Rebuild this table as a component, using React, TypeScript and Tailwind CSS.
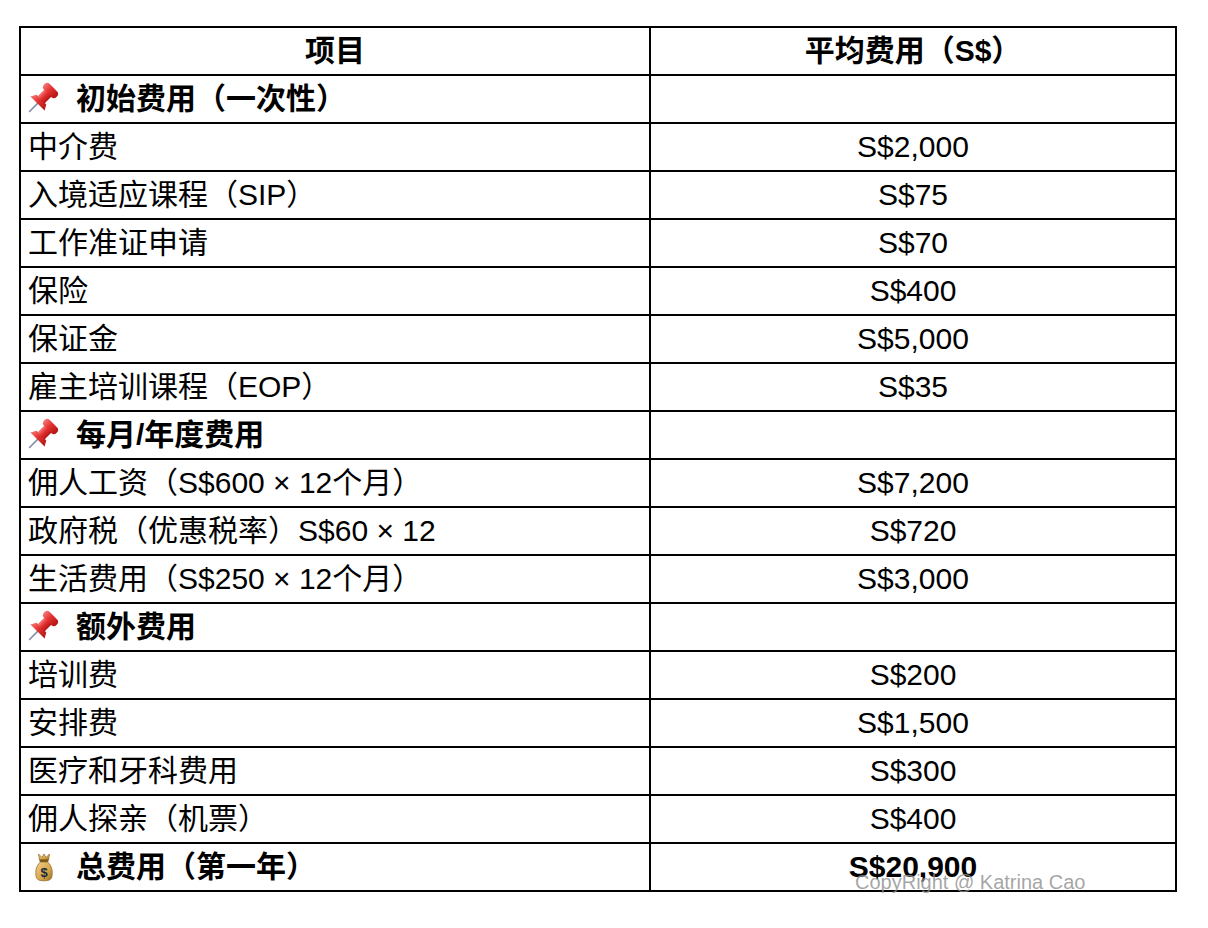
import React from "react";

type Row = {
  label: string;
  value: string;
  kind?: "section" | "total";
};

const rows: Row[] = [
  { label: "初始费用（一次性）", value: "", kind: "section" },
  { label: "中介费", value: "S$2,000" },
  { label: "入境适应课程（SIP）", value: "S$75" },
  { label: "工作准证申请", value: "S$70" },
  { label: "保险", value: "S$400" },
  { label: "保证金", value: "S$5,000" },
  { label: "雇主培训课程（EOP）", value: "S$35" },
  { label: "每月/年度费用", value: "", kind: "section" },
  { label: "佣人工资（S$600 × 12个月）", value: "S$7,200" },
  { label: "政府税（优惠税率）S$60 × 12", value: "S$720" },
  { label: "生活费用（S$250 × 12个月）", value: "S$3,000" },
  { label: "额外费用", value: "", kind: "section" },
  { label: "培训费", value: "S$200" },
  { label: "安排费", value: "S$1,500" },
  { label: "医疗和牙科费用", value: "S$300" },
  { label: "佣人探亲（机票）", value: "S$400" },
  { label: "总费用（第一年）", value: "S$20,900", kind: "total" },
];

function PinIcon() {
  return (
    <svg width="30" height="30" viewBox="0 0 30 30" className="overflow-visible">
      <defs>
        <linearGradient id="pinRed" x1="0" x2="1" y1="0" y2="0">
          <stop offset="0" stopColor="#f47a7a" />
          <stop offset="0.45" stopColor="#e3312f" />
          <stop offset="1" stopColor="#b01515" />
        </linearGradient>
      </defs>
      <g transform="translate(12 16) rotate(45) scale(1.25)">
        {/* needle */}
        <line x1="0" y1="3" x2="0" y2="13" stroke="#7f8ca6" strokeWidth="1.2" strokeLinecap="round" />
        {/* base flange */}
        <path d="M-8 4 L8 4 L5.5 -0.5 L-5.5 -0.5 Z" fill="url(#pinRed)" />
        {/* neck */}
        <rect x="-4" y="-9" width="8" height="9" fill="url(#pinRed)" />
        {/* cap */}
        <rect x="-7" y="-14" width="14" height="6.5" rx="3" fill="url(#pinRed)" />
      </g>
    </svg>
  );
}

function MoneyBagIcon() {
  return (
    <svg width="20" height="30" viewBox="0 0 20 30">
      <defs>
        <linearGradient id="bagGold" x1="0" x2="1" y1="0" y2="1">
          <stop offset="0" stopColor="#f1d08a" />
          <stop offset="0.6" stopColor="#d7a64c" />
          <stop offset="1" stopColor="#9e6f26" />
        </linearGradient>
      </defs>
      {/* top flaps */}
      <path d="M4.5 2 L8 5.5 L10 2 L12 5.5 L15.5 2 L14.5 8 L5.5 8 Z" fill="url(#bagGold)" stroke="#8b6420" strokeWidth="0.7" />
      {/* tie */}
      <rect x="5.5" y="7.5" width="9" height="2.6" rx="1" fill="#7d561c" />
      {/* body */}
      <path d="M6.5 10 C1.5 14 1.5 20 2 24 C2.5 28 5.5 28.8 10 28.8 C14.5 28.8 17.5 28 18 24 C18.5 20 18.5 14 13.5 10 Z" fill="url(#bagGold)" stroke="#8b6420" strokeWidth="0.7" />
      <text x="10" y="25" textAnchor="middle" fontSize="13" fontWeight="700" fill="#1b2a3c" fontFamily="'Liberation Sans', sans-serif">
        $
      </text>
    </svg>
  );
}

export default function App() {
  return (
    <div className="relative w-[1208px] h-[928px] bg-white font-['Liberation_Sans','Noto_Sans_CJK_SC',sans-serif] text-black">
      <div className="pl-[19px] pt-[26px]">
        <table className="w-[1158px] table-fixed border-collapse border-2 border-black text-[30px] leading-none">
          <colgroup>
            <col className="w-[630px]" />
            <col />
          </colgroup>
          <thead>
            <tr className="h-[48px]">
              <th className="border-2 border-black p-0 text-center font-bold">项目</th>
              <th className="border-2 border-black p-0 text-center font-bold">平均费用（S$）</th>
            </tr>
          </thead>
          <tbody>
            {rows.map((row, idx) => (
              <tr key={idx} className="h-[48px]">
                <td className="border-2 border-black py-0 pl-[7px] pr-0 align-middle">
                  {row.kind ? (
                    <div className="flex items-center font-bold">
                      <span className="w-[32px] flex items-center justify-center">
                        {row.kind === "section" ? <PinIcon /> : <MoneyBagIcon />}
                      </span>
                      <span className="ml-[16px]">{row.label}</span>
                    </div>
                  ) : (
                    <span>{row.label}</span>
                  )}
                </td>
                <td className={`border-2 border-black p-0 text-center align-middle ${row.kind === "total" ? "font-bold" : ""}`}>
                  {row.value}
                </td>
              </tr>
            ))}
          </tbody>
        </table>
      </div>

      {/* watermark */}
      <div className="absolute left-[855px] top-[872px] text-[20px] leading-none text-[#8e8e8e]/80 whitespace-nowrap">
        CopyRight @ Katrina Cao
      </div>
    </div>
  );
}
